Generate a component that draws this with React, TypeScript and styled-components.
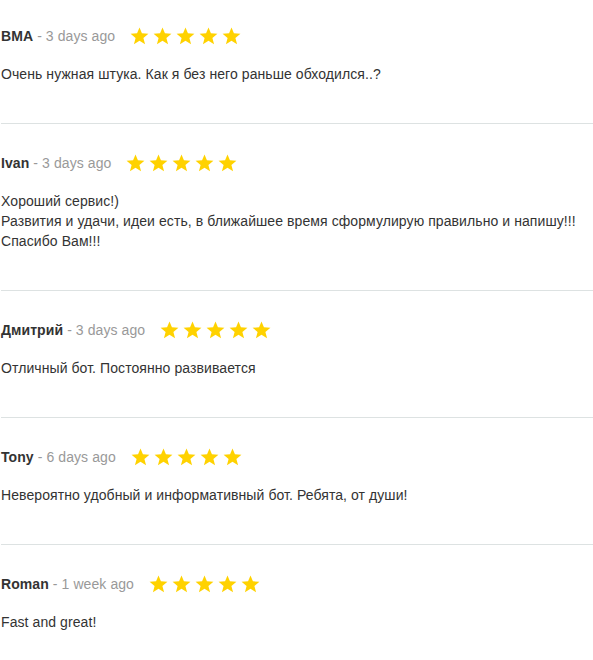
import React from "react";
import styled, { createGlobalStyle } from "styled-components";

const Global = createGlobalStyle`
  html, body { margin: 0; padding: 0; background: #fff; }
  body { font-family: "Liberation Sans", Arial, sans-serif; font-size: 14px; color: #333; letter-spacing: 0.08px; }
`;

const List = styled.div`
  display: flex;
  flex-direction: column;
  padding-left: 1px;
`;

const Review = styled.div<{ $first?: boolean }>`
  padding: ${(p) => (p.$first ? "24px" : "27px")} 0 39px;
  border-top: ${(p) => (p.$first ? "none" : "1px solid #dde2e2")};
`;

const Header = styled.div`
  display: flex;
  align-items: center;
  height: 24px;
  line-height: 24px;
`;

const Name = styled.span`
  font-weight: bold;
  color: #333;
`;

const Date = styled.span`
  color: #999;
  margin-left: 4px;
`;

const Stars = styled.div`
  display: flex;
  gap: 4px;
  margin-left: 15px;
`;

const Body = styled.div`
  margin-top: 16px;
  line-height: 20px;
  color: #333;
`;

const Star = () => (
  <svg width="19" height="18" viewBox="0 0 24 23">
    <polygon
      points="12,0.5 15.1,8.1 23.4,8.6 17,13.9 19.1,22 12,17.5 4.9,22 7,13.9 0.6,8.6 8.9,8.1"
      fill="#ffd200"
    />
  </svg>
);

const reviews = [
  { name: "BMA", date: "3 days ago", text: ["Очень нужная штука. Как я без него раньше обходился..?"] },
  {
    name: "Ivan",
    date: "3 days ago",
    text: [
      "Хороший сервис!)",
      "Развития и удачи, идеи есть, в ближайшее время сформулирую правильно и напишу!!!",
      "Спасибо Вам!!!",
    ],
  },
  { name: "Дмитрий", date: "3 days ago", text: ["Отличный бот. Постоянно развивается"] },
  { name: "Tony", date: "6 days ago", text: ["Невероятно удобный и информативный бот. Ребята, от души!"] },
  { name: "Roman", date: "1 week ago", text: ["Fast and great!"] },
];

export default function App() {
  return (
    <>
      <Global />
      <List>
        {reviews.map((r, i) => (
          <Review key={i} $first={i === 0}>
            <Header>
              <Name>{r.name}</Name>
              <Date>- {r.date}</Date>
              <Stars>
                {[0, 1, 2, 3, 4].map((s) => (
                  <Star key={s} />
                ))}
              </Stars>
            </Header>
            <Body>
              {r.text.map((t, j) => (
                <React.Fragment key={j}>
                  {j > 0 && <br />}
                  {t}
                </React.Fragment>
              ))}
            </Body>
          </Review>
        ))}
      </List>
    </>
  );
}
